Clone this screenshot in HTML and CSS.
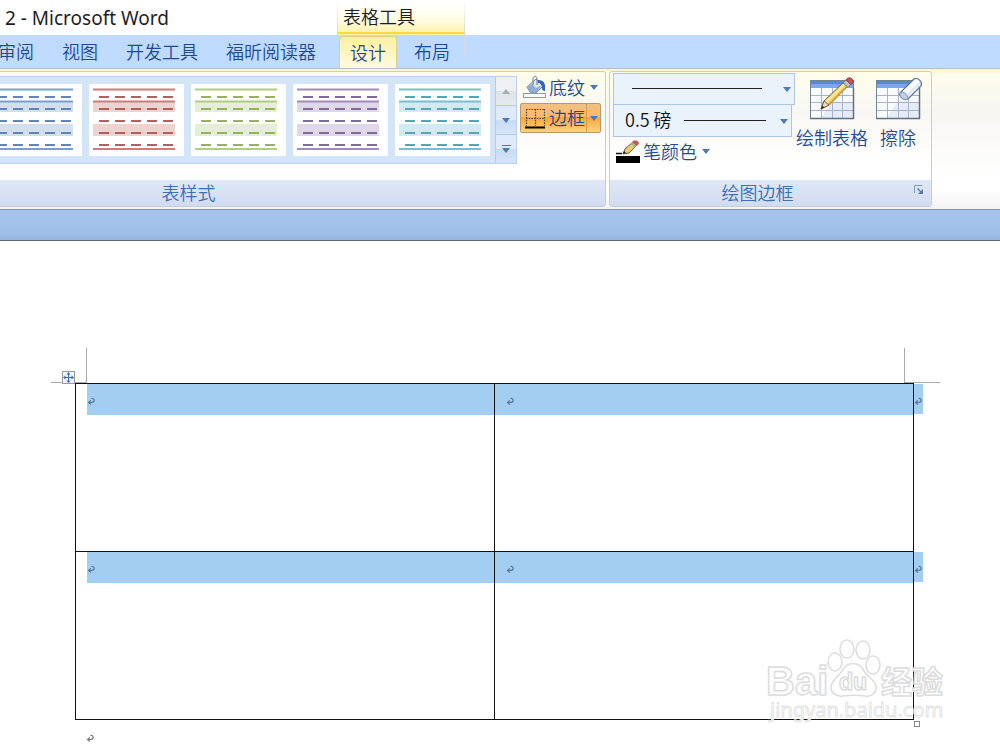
FILE: index.html
```html
<!DOCTYPE html>
<html lang="zh-CN">
<head>
<meta charset="utf-8">
<title>Microsoft Word</title>
<link rel="stylesheet" href="styles.css">
</head>
<body>
<svg class="defs" aria-hidden="true">
  <symbol id="thumb" viewBox="0 0 95 72">
    <path class="band" d="M4 18h82v10H4zM4 40h82v12H4z"/>
    <path class="rule" d="M4 5.5h82M4 17.5h82M4 65h82"/>
    <path class="dash" d="M10 13h76M10 25h76M10 37h76M10 49h76M10 61h76"/>
  </symbol>
  <symbol id="arrow" viewBox="0 0 8 5"><path d="M0 0h8L4 5z"/></symbol>
  <symbol id="mark" viewBox="0 0 9 9">
    <path d="M4.500 1.500c3-.8 4 3.500 0 4H2M3.800 3.500L1.600 5.500l2.200 2" fill="none" stroke="currentColor" stroke-width="1.200"/>
  </symbol>
  <symbol id="grid" viewBox="0 0 48 44">
    <rect x="2.5" y="3.5" width="43" height="38" fill="#fbfcff" stroke="#6f8296"/>
    <path d="M3 4h42v7H3z" fill="#5b86e0"/>
    <path d="M3 7h42v4H3z" fill="#7ea5f2"/>
    <path d="M23 25h22v16H13z" fill="#dde5f3" opacity=".7"/>
    <path d="M13.500 11v30M24.500 11v30M34.500 11v30M3 18.500h42M3 25.500h42M3 33.500h42" stroke="#a5b4cb"/>
    <path d="M2 41.500h44M45.500 11v31" stroke="#5f7284" stroke-width="1.500"/>
  </symbol>
</svg>

<header>
  <div class="titlebar">
    <h1 class="title">2 - Microsoft Word</h1>
    <div class="context">表格工具</div>
  </div>
  <nav class="tabs">
    <button class="tab">审阅</button>
    <button class="tab">视图</button>
    <button class="tab">开发工具</button>
    <button class="tab">福昕阅读器</button>
    <button class="tab active">设计</button>
    <button class="tab">布局</button>
  </nav>
  <div class="ribbon">
    <section class="group styles">
      <div class="tools">
        <div class="gallery">
          <div class="thumbs">
            <button class="thumb blue" aria-label="蓝色"><svg><use href="#thumb"/></svg></button>
            <button class="thumb red" aria-label="红色"><svg><use href="#thumb"/></svg></button>
            <button class="thumb green" aria-label="绿色"><svg><use href="#thumb"/></svg></button>
            <button class="thumb purple" aria-label="紫色"><svg><use href="#thumb"/></svg></button>
            <button class="thumb teal" aria-label="青色"><svg><use href="#thumb"/></svg></button>
          </div>
          <div class="scroller">
            <button class="step off" aria-label="上一行"><svg class="arrow up"><use href="#arrow"/></svg></button>
            <button class="step" aria-label="下一行"><svg class="arrow"><use href="#arrow"/></svg></button>
            <button class="step more" aria-label="更多"><svg class="arrow"><use href="#arrow"/></svg></button>
          </div>
        </div>
        <div class="side">
          <button class="small">
            <svg class="ico" viewBox="0 0 24 24">
              <rect x=".5" y="17.500" width="22" height="4" fill="#fff" stroke="#8c9aa8"/>
              <path d="M4 11L13 3l7 7-7 7-6-1z" fill="#dfe8f5" stroke="#6d83a6"/>
              <path d="M9 8l4 4 6-3-6 8-6-1-3-5z" fill="#8fabd8"/>
              <path d="M10 9V2.500c0-2.500 4-2.500 4 0V9" fill="none" stroke="#62728c"/>
              <path d="M15 4c4 0 7 2 7 6v5c-2 0-3-1-3-3 0-3-1-5-4-5z" fill="#2f65bd"/>
            </svg>
            <span>底纹</span>
            <svg class="arrow"><use href="#arrow"/></svg>
          </button>
          <button class="small on">
            <svg class="ico" viewBox="0 0 24 24">
              <path d="M3.500 3v17M12.500 3v17M21.500 3v17M3 3.500h19M3 12.500h19" fill="none" stroke="#4c4438" stroke-width="1.200" stroke-dasharray="1.500 1.200"/>
              <path d="M2 21.500h20" stroke="#000" stroke-width="2"/>
            </svg>
            <span>边框</span>
            <span class="split"><svg class="arrow"><use href="#arrow"/></svg></span>
          </button>
        </div>
      </div>
      <h2 class="caption">表样式</h2>
    </section>
    <section class="group draw">
      <div class="tools">
        <div class="pens">
          <label class="combo wide">
            <select aria-label="笔样式"><option></option></select>
            <span class="line"></span>
            <svg class="arrow"><use href="#arrow"/></svg>
          </label>
          <label class="combo">
            <select aria-label="笔划粗细"><option>0.5 磅</option></select>
            <span class="line weight"></span>
            <svg class="arrow"><use href="#arrow"/></svg>
          </label>
          <button class="small pen">
            <svg class="ico" viewBox="0 0 24 24">
              <path d="M0 13.500h6" stroke="#111" stroke-width="1.500"/>
              <path d="M0 16h24v7H0z"/>
              <path d="M7 14l2-5 9-8 4 3-9 9z" fill="#e9cd74" stroke="#6b5a33"/>
              <path d="M16 2.500l2-2h3l2 2-.5 2-2 1.500z" fill="#c25c58"/>
              <path d="M14.500 4l2-1.500 4 3.500-2 1.500z" fill="#a6b59a"/>
              <path d="M7 14l1-3 2 2z" fill="#222"/>
            </svg>
            <span>笔颜色</span>
            <svg class="arrow"><use href="#arrow"/></svg>
          </button>
        </div>
        <button class="large">
          <svg class="big" viewBox="0 0 48 44">
            <use href="#grid"/>
            <path d="M13 32l3-8L37 4l4 4-20 20z" fill="#f0ce66" stroke="#7a6336"/>
            <path d="M17 24.500L37 5.500l1.500 1.500L19 26z" fill="#fbe9a8"/>
            <path d="M20 27.500L39.500 8l1 1L22 28z" fill="#c99a3a"/>
            <path d="M13 32l3-8 5 4z" fill="#f1dcb8" stroke="#7a6336"/>
            <path d="M13 32l1.200-3.500 2.300 2z" fill="#333"/>
            <path d="M35 6l3-3 5 4.500-3 3z" fill="#b9c4bd" stroke="#6d7b77"/>
            <path d="M38 3c2-4 8-2 7 2.500L43 7.500z" fill="#c9525a" stroke="#8c4246"/>
          </svg>
          <span>绘制表格</span>
        </button>
        <button class="large">
          <svg class="big" viewBox="0 0 48 44">
            <use href="#grid"/>
            <path d="M26 16L40 2c3-2 9 2 7 7L34 22c-4 2-9-2-8-6z" fill="#e3ebf8" stroke="#62769a" stroke-width="1.300"/>
            <path d="M29 14L41 3c2-1 4 0 4 2L32 17z" fill="#fff"/>
            <path d="M26 16c3-2 8 1 8 6-4 2-9-2-8-6z" fill="#c2cee3" stroke="#8496b4"/>
          </svg>
          <span>擦除</span>
        </button>
      </div>
      <h2 class="caption">绘图边框
        <button class="launcher" aria-label="边框和底纹">
          <svg viewBox="0 0 10 10"><path d="M.5 8V.5H8" fill="none" stroke="#7f9dc0"/><path d="M3.500 3.500l4 4" stroke="#55789f" stroke-width="1.300"/><path d="M9 4v5H4z" fill="#55789f"/></svg>
        </button>
      </h2>
    </section>
  </div>
  <div class="band-bar"></div>
</header>

<main class="page">
  <div class="margins"><i class="corner left"></i><i class="corner right"></i>
    <button class="handle" aria-label="选择表格">
      <svg viewBox="0 0 11 11"><path d="M5.500 1v9M1 5.500h9" stroke="#3b67c8"/><path d="M5.500 0l2 2.500h-4zM5.500 11l2-2.500h-4zM0 5.500l2.500-2v4zM11 5.500l-2.500-2v4z" fill="#3b67c8"/></svg>
    </button>
  </div>
  <div class="sheet">
    <table class="grid">
      <tr>
        <td><svg class="mark"><use href="#mark"/></svg></td>
        <td><svg class="mark"><use href="#mark"/></svg><span class="tail"><svg class="mark"><use href="#mark"/></svg></span></td>
      </tr>
      <tr>
        <td><svg class="mark"><use href="#mark"/></svg></td>
        <td><svg class="mark"><use href="#mark"/></svg><span class="tail"><svg class="mark"><use href="#mark"/></svg></span></td>
      </tr>
    </table>
    <i class="resize"></i>
    <svg class="watermark" viewBox="0 0 184 90">
      <g class="outline">
        <text class="bai" x="1" y="56">Bai</text>
        <ellipse cx="70" cy="23" rx="7" ry="9"/>
        <ellipse cx="82" cy="10" rx="7" ry="9"/>
        <ellipse cx="98" cy="11" rx="7" ry="9"/>
        <ellipse cx="108" cy="26" rx="7" ry="9"/>
        <path d="M66 47c1-6 7-9 11-15 5-10 17-10 22 0 4 6 11 9 12 15 1 7-5 11-11 10-8-1-15-1-22 0-7 1-13-4-12-10z"/>
        <text class="du" x="74" y="51">du</text>
        <text class="jy" x="116" y="54">经验</text>
      </g>
      <text class="url" x="5" y="78">jingyan.baidu.com</text>
    </svg>
  </div>
  <p class="after"><svg class="mark"><use href="#mark"/></svg></p>
</main>
</body>
</html>
```

FILE: styles.css
```css
* { box-sizing: border-box; }

body {
  margin: 0;
  background: #fff;
  font-family: "Noto Sans", "Noto Sans CJK SC", sans-serif;
  font-size: 18px;
  line-height: 24px;
  color: #1e1e1e;
  overflow-x: hidden;
}

h1, h2, p { margin: 0; font-size: inherit; font-weight: inherit; }

button {
  margin: 0;
  padding: 0;
  border: 0;
  background: none;
  font: inherit;
  color: #1f4a93;
}

.tab, .small, .large, .context, .caption, .combo select {
  font-family: "Noto Sans CJK SC", "Noto Sans", sans-serif;
  font-weight: 350;
}

.defs { position: absolute; width: 0; height: 0; }
.arrow { display: block; flex: none; width: 8px; height: 5px; fill: #4c7ab5; }

/* title bar */
.titlebar { display: flex; height: 35px; }
.title { width: 337px; padding: 6px 0 0 5px; font-size: 19px; white-space: nowrap; }
.context {
  width: 128px;
  padding: 4px 0 0 5px;
  border: solid #e9e4c8;
  border-width: 0 1px;
  border-image: linear-gradient(#fff, #d9d6c4) 1;
  background: linear-gradient(#ffd83c, #ffd83c) 0 32px / 100% 2px no-repeat, linear-gradient(#fff 10%, #fffbe0 60%, #fff0a0);
}

/* tabs */
.tabs {
  display: flex;
  height: 34px;
  padding-top: 1px;
  background: linear-gradient(90deg, #d3dbdf, #d3dbdf) 464px 0 / 1px 20px no-repeat, #bfdbff;
  border-bottom: 1px solid #b5bfcc;
}
.tab { flex: none; padding: 0 14px 2px; white-space: nowrap; }
.tab:first-child { padding-left: 0; margin-left: -2px; }
.tab:nth-child(4) { margin-right: 9px; }
.tab.active {
  width: 58px;
  padding: 0 0 2px;
  margin-right: 3px;
  border: 1px solid #dfcf8e;
  border-bottom: 0;
  border-radius: 4px 4px 0 0;
  background: linear-gradient(#fff0a0, #fff6bf 50%, #fffbe0);
}

/* ribbon */
.ribbon {
  display: flex;
  gap: 3px;
  padding: 2px 0;
  background: linear-gradient(#fdf5c8, #fffdee 6px, #f7f6f3 40px, #fff 110px, #fff 120px, #f3f3f3);
}
.group {
  display: flex;
  flex-direction: column;
  height: 136px;
  border: 1px solid #c9ccd2;
  border-radius: 3px;
  background: linear-gradient(#fffeea, #f8f7f3 40px, #fff 90px);
}
.group.styles { width: 606px; border-left: 0; border-radius: 0 3px 3px 0; }
.group.draw { width: 323px; }
.tools { display: flex; flex: 1; }
.caption {
  position: relative;
  height: 26px;
  background: linear-gradient(#dfe8f6, #d1dcf0);
  color: #3f6fb3;
  text-align: center;
}
.styles .caption { padding-right: 228px; }
.draw .caption { padding-right: 26px; }
.launcher { position: absolute; right: 7px; top: 5px; width: 10px; height: 10px; }
.launcher svg { display: block; }

/* table style gallery */
.gallery { display: flex; width: 517px; height: 88px; margin-top: 4px; border: 1px solid #bcd0ee; border-left: 0; }
.thumbs {
  display: flex;
  flex: 1;
  justify-content: flex-end;
  gap: 7px;
  padding: 7px 5px 7px 0;
  background: #d4e5f8;
  overflow: hidden;
}
.thumb { flex: none; width: 95px; background: #fff; }
.thumb svg { display: block; width: 95px; height: 72px; }
.band { fill: var(--band); }
.rule { stroke: var(--rule); stroke-width: 2px; }
.dash { stroke: var(--dash); stroke-width: 2px; stroke-dasharray: 10px 6px; }
.blue { --band: #d3dfee; --rule: #7b9fd0; --dash: #5f86b4; }
.red { --band: #efd3d3; --rule: #cd7b7b; --dash: #b25f5f; }
.green { --band: #e6eed5; --rule: #b3cc82; --dash: #97b066; }
.purple { --band: #dfd8e8; --rule: #a18bbb; --dash: #806a9a; }
.teal { --band: #d2eaf1; --rule: #78bdd0; --dash: #5aa3b5; }
.scroller { display: flex; flex-direction: column; width: 21px; }
.step {
  display: flex;
  flex: 1;
  align-items: center;
  justify-content: center;
  border: solid #b5cbea;
  border-width: 0 0 1px 1px;
  background: linear-gradient(#dfebfc 50%, #c9dbf5 50%, #d5e4fa);
}
.step:last-child { border-bottom: 0; }
.step.off { background: linear-gradient(#eef0f3 50%, #dfe2e7 50%, #e6e8ec); }
.step.off .arrow { fill: #a9adb3; transform: rotate(180deg); }
.step.more { flex-direction: column; gap: 2px; }
.step.more::before { content: ""; width: 9px; height: 1px; background: #4c7ab5; }

/* shading and borders */
.side { display: flex; flex-direction: column; gap: 1px; padding: 1px 0 0 3px; }
.small { display: flex; align-items: center; width: 81px; height: 29px; padding-left: 3px; white-space: nowrap; }
.small .ico { flex: none; width: 24px; height: 24px; margin-right: 2px; }
.small > span:not(.split) { padding-bottom: 2px; }
.small > .arrow { margin-left: 5px; }
.small.on {
  border: 1px solid #b79a6c;
  border-radius: 2px;
  padding-left: 2px;
  height: 30px;
  background: linear-gradient(#f3c083, #f9bd6c 45%, #f7a537 46%, #fdd27c);
}
.split { display: flex; align-items: center; justify-content: center; flex: 1; height: 28px; margin-left: 1px; border-left: 1px solid #cf9d52; }

/* pen settings */
.pens { width: 186px; padding: 1px 0 0 3px; }
.combo { position: relative; display: block; width: 179px; height: 32px; }
.combo.wide { width: 182px; }
.combo select {
  display: block;
  width: 100%;
  height: 100%;
  padding: 0 0 3px 11px;
  border: 1px solid #aec5e5;
  border-radius: 0;
  background: #eaf2fc;
  font-size: 18px;
  color: #111;
  appearance: none;
}
.combo + .combo select { border-top: 0; }
.line { position: absolute; left: 19px; right: 33px; top: 15px; height: 1px; background: #222; pointer-events: none; }
.line.weight { left: 71px; right: 26px; }
.combo .arrow { position: absolute; right: 4px; top: 14px; pointer-events: none; }
.small.pen { width: 100px; }
.small.pen .ico { margin-right: 3px; }

.large { display: flex; flex-direction: column; align-items: center; flex: none; width: 72px; padding-top: 5px; white-space: nowrap; }
.large + .large { width: 60px; }
.big { flex: none; width: 48px; height: 44px; margin-bottom: 4px; overflow: visible; }

.band-bar {
  height: 32px;
  border-top: 1px solid #8295b5;
  border-bottom: 1px solid #5e6773;
  background: linear-gradient(#a6c4eb, #9fbfe8 80%, #94b3dc);
}

/* document */
.page { padding: 107px 86px 0 75px; }
.margins { position: relative; height: 35px; }
.corner { position: absolute; top: 0; width: 36px; height: 35px; border-bottom: 1px solid #aaa; }
.corner.left { left: -24px; border-right: 1px solid #aaa; }
.corner.right { right: -26px; border-left: 1px solid #aaa; }
.handle { position: absolute; left: -13px; bottom: -1px; width: 13px; height: 13px; border: 1px solid #999; background: #f4f4f4; }
.handle svg { display: block; }
.sheet { position: relative; }
.grid { width: 100%; border-collapse: collapse; table-layout: fixed; }
.grid td {
  position: relative;
  height: 168px;
  padding: 13px 0 0 11px;
  border: 1px solid #111;
  vertical-align: top;
  background: linear-gradient(#a3cdf1, #a3cdf1) 0 0 / 100% 31px no-repeat;
}
.grid td:first-child { background-position: 11px 0; }
.mark { display: block; width: 9px; height: 9px; color: #55779c; }
.tail { position: absolute; left: calc(100% + 1px); top: 0; width: 9px; height: 30px; padding-top: 13px; background: #a3cdf1; }
.resize { position: absolute; right: -6px; bottom: -7px; width: 6px; height: 6px; border: 1px solid #888; background: #fff; }
.after { padding: 14px 0 0 11px; }
.after .mark { color: #777; }

/* watermark */
.watermark { position: absolute; right: -35px; bottom: -9px; width: 184px; height: 90px; }
.outline { fill: #fff; stroke: #dcdcdc; stroke-width: 1.5px; stroke-linejoin: round; }
.bai { font: bold 40px "Liberation Sans", sans-serif; }
.du { font: bold 23px "Liberation Sans", sans-serif; }
.jy { font: bold 31px "Noto Sans CJK SC", sans-serif; }
.url { font: 20px "Noto Sans", sans-serif; fill: #fff; stroke: #e4e4e4; stroke-width: 1px; }
```
